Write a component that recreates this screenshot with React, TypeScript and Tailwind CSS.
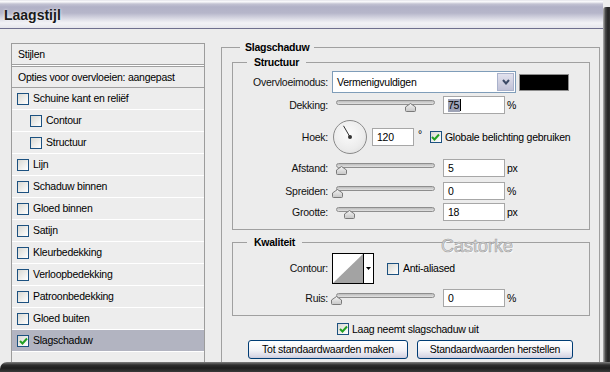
import React from "react";

const STYLES = [
  { label: "Schuine kant en reliëf" },
  { label: "Contour", indent: true },
  { label: "Structuur", indent: true },
  { label: "Lijn" },
  { label: "Schaduw binnen" },
  { label: "Gloed binnen" },
  { label: "Satijn" },
  { label: "Kleurbedekking" },
  { label: "Verloopbedekking" },
  { label: "Patroonbedekking" },
  { label: "Gloed buiten" },
  { label: "Slagschaduw", checked: true, active: true },
];

function Check({ checked }: { checked?: boolean }) {
  return (
    <span className="flex h-[12px] w-[12px] shrink-0 items-center justify-center border border-[#1c5180] bg-[linear-gradient(135deg,#d8d8d2,#f2f2f0_65%,#ffffff)]">
      {checked && (
        <svg width="9" height="8" viewBox="0 0 9 8">
          <path d="M1 4 L3.5 6.5 L8 1.5" stroke="#21a121" strokeWidth="2" fill="none" />
        </svg>
      )}
    </span>
  );
}

function Slider({ thumb }: { thumb: string }) {
  return (
    <div className="relative h-full w-[104px]">
      <div className="ml-[4px] mt-[4px] h-[5px] w-[99px] rounded-full border border-[#8e8e8e] bg-gradient-to-b from-[#bcbcbc] to-[#e2e2e2]" />
      <svg className={`absolute top-[7px] ${thumb}`} width="11" height="9" viewBox="0 0 11 9">
        <defs>
          <linearGradient id="th" x1="0" y1="0" x2="0" y2="1">
            <stop offset="0" stopColor="#f4f4f4" />
            <stop offset="1" stopColor="#c6c6c6" />
          </linearGradient>
        </defs>
        <path d="M0.5 4 L5.5 0.5 L10.5 4 L10.5 7.5 Q10.5 8.5 9.5 8.5 L1.5 8.5 Q0.5 8.5 0.5 7.5 Z" fill="url(#th)" stroke="#7a7a7a" />
      </svg>
    </div>
  );
}

function Field({ children, w = "w-[62px]" }: { children: React.ReactNode; w?: string }) {
  return (
    <div className={`flex h-[18px] ${w} items-center border border-[#a7a7a7] bg-white pl-[4px]`}>
      {children}
    </div>
  );
}

function Row({ label, className, children }: { label: string; className: string; children: React.ReactNode }) {
  return (
    <div className={`flex items-center ${className}`}>
      <span className="w-[95px] text-right text-[#111]">{label}</span>
      <div className="ml-[4px] flex h-full items-center">{children}</div>
    </div>
  );
}

function SliderRow({ label, className, thumb, value, unit }: { label: string; className: string; thumb: string; value: React.ReactNode; unit: string }) {
  return (
    <Row label={label} className={`h-[18px] ${className}`}>
      <Slider thumb={thumb} />
      <div className="ml-[7px]">
        <Field>{value}</Field>
      </div>
      <span className="ml-[2px]">{unit}</span>
    </Row>
  );
}

function Button({ children, w }: { children: React.ReactNode; w: string }) {
  return (
    <button
      type="button"
      className={`flex h-[19px] ${w} items-center justify-center rounded-[3px] border border-[#003c74] bg-[linear-gradient(to_bottom,#ffffff,#f2f2f6_55%,#d9d8e6_90%,#c9c8da)] text-black`}
    >
      {children}
    </button>
  );
}

export default function App() {
  return (
    <div className="flex h-[372px] w-[610px] flex-col overflow-hidden bg-[#ececec] font-['Liberation_Sans',Arial,sans-serif] text-[10.5px] leading-[13px] tracking-[-0.25px] text-black">
      <div className="flex h-[362px]">
        <div className="flex w-[603px] flex-col">
          {/* Titelbalk */}
          <div className="flex h-[29px] items-center border-b border-[#6f6f8e] bg-[linear-gradient(to_bottom,#d9d9e1_0px,#fbfbfd_1px,#f4f4f7_2px,#c2c2d2_4px,#b1b1c7_7px,#b6b6ca_13px,#dcdce6_19px,#f2f2f6_23px,#e6e6ec_28px)] pl-[4px] pt-[3px]">
            <span className="text-[14px] font-bold tracking-normal text-[#1a1a1a] [text-shadow:0_0_3px_#ffffff]">Laagstijl</span>
          </div>

          <div className="flex flex-1 items-start bg-[#ececec]">
            {/* Stijlen-lijst */}
            <div className="ml-[11px] mt-[14px] flex w-[194px] flex-col self-stretch border border-b-0 border-[#9c9c9c] bg-[#ededed]">
              <div className="flex h-[21px] items-center border-b border-[#a0a0a0] pl-[6px]">Stijlen</div>
              <div className="h-[1px] bg-white" />
              <div className="flex h-[22px] items-center border-y border-[#a0a0a0] pl-[6px]">Opties voor overvloeien: aangepast</div>
              {STYLES.map((s) => (
                <div
                  key={s.label}
                  className={`flex h-[22px] items-center gap-[4px] border-b border-white ${s.indent ? "pl-[18px]" : "pl-[5px]"} ${s.active ? "bg-[#b2b4c1]" : ""}`}
                >
                  <Check checked={s.checked} />
                  <span>{s.label}</span>
                </div>
              ))}
            </div>

            {/* Slagschaduw */}
            <fieldset className="ml-[16px] mt-[11px] w-[379px] self-stretch border border-b-0 border-[#a0a0a0] pl-[10px]">
              <legend className="ml-[8px] px-[5px] font-bold leading-[14px]">Slagschaduw</legend>

              <fieldset className="mt-[1px] w-[358px] border border-[#a0a0a0] pb-[8px]">
                <legend className="ml-[14px] px-[7px] font-bold leading-[14px]">Structuur</legend>

                <Row label="Overvloeimodus:" className="mt-[2px] h-[22px]">
                  <div className="flex h-[22px] w-[184px] items-center justify-between border border-[#7f9db9] bg-white pl-[4px] pr-[1px]">
                    <span>Vermenigvuldigen</span>
                    <span className="flex h-[18px] w-[17px] items-center justify-center border border-[#a9b2cc] bg-gradient-to-b from-[#e2e2ee] to-[#c1c2d7]">
                      <svg width="8" height="6" viewBox="0 0 8 6">
                        <path d="M1 1 L4 4.5 L7 1" stroke="#3c4a66" strokeWidth="2" fill="none" />
                      </svg>
                    </span>
                  </div>
                  <div className="ml-[3px] h-[17px] w-[50px] border border-[#8d8d8d] bg-black" />
                </Row>

                <SliderRow
                  label="Dekking:"
                  className="mt-[3px]"
                  thumb="left-[73px]"
                  unit="%"
                  value={
                    <span className="flex items-center">
                      <span className="bg-[#9ea3b6] pr-px">75</span>
                      <span className="h-[12px] w-px bg-black" />
                    </span>
                  }
                />

                <Row label="Hoek:" className="mt-[6px] h-[34px]">
                  <div className="ml-[1px] h-[34px] w-[34px] rounded-full border border-[#8a8a8a] bg-[radial-gradient(circle_at_45%_40%,#fbfbfb,#ececec_60%,#d8d8d8)]">
                    <svg width="32" height="32" viewBox="0 0 32 32">
                      <line x1="16" y1="16" x2="9.5" y2="4.8" stroke="#333" strokeWidth="1" />
                      <circle cx="16" cy="16" r="2" fill="#333" />
                    </svg>
                  </div>
                  <div className="ml-[5px]">
                    <Field w="w-[42px]">120</Field>
                  </div>
                  <span className="ml-[4px] self-start pt-[8px]">°</span>
                  <div className="ml-[8px] flex items-center gap-[3px]">
                    <Check checked />
                    <span>Globale belichting gebruiken</span>
                  </div>
                </Row>

                <SliderRow label="Afstand:" className="mt-[5px]" thumb="left-[4px]" value="5" unit="px" />
                <SliderRow label="Spreiden:" className="mt-[5px]" thumb="left-[0px]" value="0" unit="%" />
                <SliderRow label="Grootte:" className="mt-[3px]" thumb="left-[12px]" value="18" unit="px" />
              </fieldset>

              <div className="relative mt-[5px]">
                <fieldset className="w-[358px] border border-[#a0a0a0] pb-[8px]">
                  <legend className="ml-[14px] px-[7px] font-bold leading-[14px]">Kwaliteit</legend>

                  <Row label="Contour:" className="mt-[4px] h-[31px]">
                    <div className="flex h-[31px] w-[42px] border border-black bg-white">
                      <svg width="30" height="29" viewBox="0 0 30 29">
                        <path d="M0 29 L30 0 L30 29 Z" fill="#a3a3a3" />
                      </svg>
                      <div className="flex w-[10px] items-center justify-center border-l border-black">
                        <svg width="5" height="3" viewBox="0 0 5 3">
                          <path d="M0 0 L5 0 L2.5 3 Z" fill="#000" />
                        </svg>
                      </div>
                    </div>
                    <div className="ml-[13px] flex items-center gap-[4px]">
                      <Check />
                      <span>Anti-aliased</span>
                    </div>
                  </Row>

                  <SliderRow label="Ruis:" className="mt-[5px]" thumb="left-[-1px]" value="0" unit="%" />
                </fieldset>
                <span className="pointer-events-none absolute left-[209px] top-[2px] text-[18px] leading-[18px] tracking-normal text-[#dcdcdc] [-webkit-text-stroke:0.6px_#9c9c9c] [text-shadow:1px_1px_1px_#ffffff]">
                  Castorke
                </span>
              </div>

              <div className="ml-[105px] mt-[6px] flex h-[14px] items-center gap-[3px]">
                <Check checked />
                <span>Laag neemt slagschaduw uit</span>
              </div>

              <div className="ml-[16px] mt-[4px] flex gap-[9px]">
                <Button w="w-[160px]">Tot standaardwaarden maken</Button>
                <Button w="w-[156px]">Standaardwaarden herstellen</Button>
              </div>
            </fieldset>
          </div>
        </div>
        <div className="mt-[7px] w-[7px] rounded-tl-[3px] bg-[linear-gradient(to_right,#b4b4b4,#4a4a4a_35%,#232323_70%,#303030)]" />
      </div>
      <div className="h-[10px] rounded-tl-[7px] bg-[linear-gradient(to_bottom,#808080_0px,#2e2e2e_3px,#1e1e1e_6px,#3a3a3a_10px)]" />
    </div>
  );
}
